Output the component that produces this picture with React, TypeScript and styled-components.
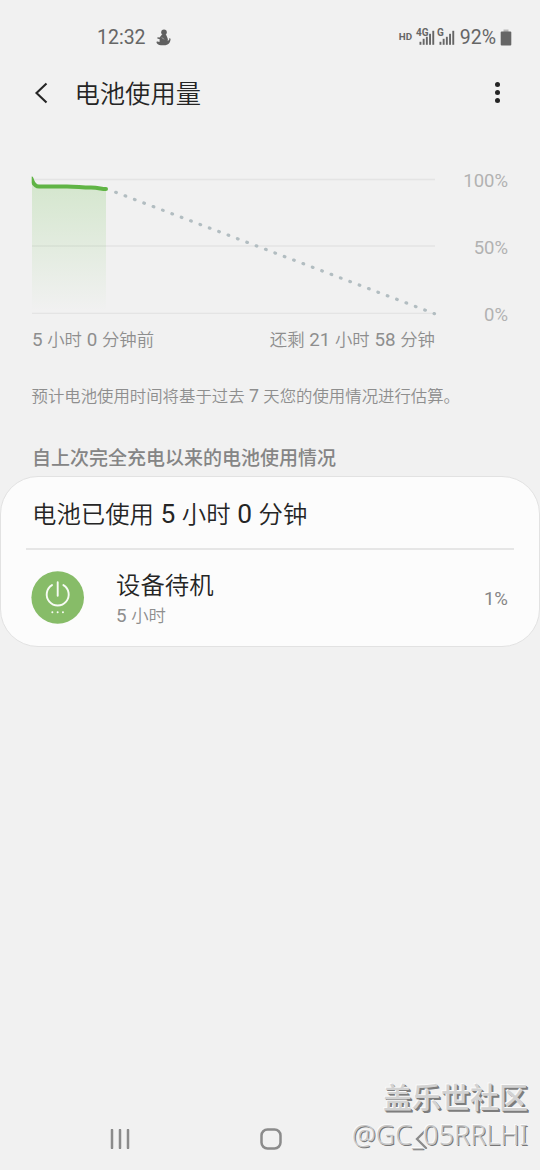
import React from 'react';
import styled, { createGlobalStyle } from 'styled-components';

const GlobalStyle = createGlobalStyle`
  * { box-sizing: border-box; }
  body {
    margin: 0;
    background: #f1f1f1;
    font-family: Roboto, "Noto Sans CJK SC DemiLight", "Noto Sans CJK SC", sans-serif;
    color: #252525;
  }
`;

const Screen = styled.div`
  position: relative;
  display: flex;
  flex-direction: column;
  width: 540px;
  height: 1170px;
  overflow: hidden;
  background: #f1f1f1;
`;

const StatusBar = styled.header`
  display: flex;
  align-items: center;
  height: 60px;
  padding: 15px 28px 0 97px;
  color: #666;
  font-size: 19.5px;
  line-height: 24px;
`;

const StatusIcons = styled.div`
  display: flex;
  align-items: center;
  margin-left: auto;
`;

const Clock = styled.span`
  width: 59px;
`;

const HdTag = styled.span`
  width: 17px;
  margin-top: -2px;
  font-size: 9.8px;
  font-weight: 700;
`;

const Level = styled.span`
  margin: 0 4px 0 3px;
`;

const TitleBar = styled.div`
  display: flex;
  align-items: center;
  height: 66px;
  padding: 0 32px 0 34px;
`;

const Title = styled.h1`
  flex: 1;
  margin: 4px 0 0 25.5px;
  font-size: 25.3px;
  font-weight: 400;
  line-height: 36px;
`;

const ChartSection = styled.section`
  display: flex;
  height: 200px;
  padding: 44px 32px 0 31px;
`;

const Plot = styled.svg`
  display: block;
  flex: none;
  overflow: visible;
`;

const Axis = styled.div`
  display: flex;
  flex: 1;
  flex-direction: column;
  justify-content: space-between;
  height: 155px;
  padding-top: 1px;
  color: #b2b2b2;
  font-size: 18.5px;
  line-height: 20px;
  text-align: right;
`;

const Num = styled.span`
  font-size: 1.08em;
  line-height: 1;
  white-space: pre;
`;

const RangeLabels = styled.div`
  display: flex;
  justify-content: space-between;
  width: 435px;
  height: 28px;
  padding-left: 32px;
  color: #8e8e8e;
  font-size: 17.4px;
  line-height: 28px;
`;

const Hint = styled.p`
  margin: 29px 0 0 31.5px;
  color: #8e8e8e;
  font-size: 16.4px;
  line-height: 28px;
  white-space: nowrap;
`;

const SectionTitle = styled.h2`
  margin: 32px 0 5px 32px;
  color: #858585;
  font-family: "Noto Sans CJK SC", sans-serif;
  font-size: 19px;
  font-weight: 500;
  line-height: 28px;
`;

const Card = styled.section`
  height: 171px;
  padding: 0 25px;
  border: 1px solid #e2e2e2;
  border-radius: 38px;
  background: #fcfcfc;
`;

const CardTitle = styled.div`
  height: 73px;
  padding-left: 6px;
  border-bottom: 2px solid #e6e6e6;
  font-size: 24.4px;
  line-height: 75px;
`;

const UsageRow = styled.div`
  display: flex;
  align-items: center;
  height: 96px;
  padding: 0 6px 0 5px;
`;

const UsageText = styled.div`
  flex: 1;
  margin: 2px 0 0 31px;
`;

const UsageName = styled.div`
  font-size: 24.4px;
  line-height: 34px;
`;

const UsageDetail = styled.div`
  color: #8e8e8e;
  font-size: 17.4px;
  line-height: 26px;
`;

const UsageShare = styled.span`
  margin-top: 2px;
  color: #858585;
  font-size: 18.6px;
`;

const NavBar = styled.nav`
  display: flex;
  align-items: center;
  gap: 130px;
  height: 62px;
  margin-top: auto;
  padding-left: 110px;
`;

const Watermark = styled.div`
  position: absolute;
  right: 12px;
  bottom: 16px;
  color: #d2d2d2;
  text-align: right;
  text-shadow: -1px -1px 0 #fafafa, 1px 1px 0 #7d7d7d, 2px 2px 0 #7d7d7d;
`;

const CommunityName = styled.div`
  font-family: "Noto Sans CJK SC", sans-serif;
  font-size: 29px;
  font-weight: 500;
  line-height: 40px;
`;

const UserName = styled.div`
  color: #c6c6c6;
  font-family: "Noto Sans", sans-serif;
  font-size: 26.9px;
  font-weight: 300;
  line-height: 38px;
  text-shadow: -1px -1px 0 #fafafa, 1px 1px 0 #777;
`;

const SnowmanIcon = () => (
  <svg width="15" height="17" viewBox="0 0 15 17" fill="#606060">
    <circle cx="8" cy="3.3" r="2.8" />
    <path d="M6 5.500Q8 4.500 10 5.500L11.500 9C12 10 12 11 11.700 12L13.300 10.700 13 9.300 14.600 9.700C14.500 13.500 12.500 16.200 8 16.200H5C2.500 16.200.600 15 .4 13C1.200 12.200 2.300 12.500 3.500 13L3.700 10.300 1.300 9.500 1.500 8.300 3.600 8.500z" />
    <path d="M6 8.500l1.800 1.800" stroke="#d8d8d8" strokeWidth=".7" />
  </svg>
);

const NetworkName = styled.text`
  font-size: 10px;
  font-weight: 700;
  fill: #666;
`;

const SignalIcon = styled.svg`
  overflow: visible;
  margin-right: 3px;
`;

const Signal = ({ label, width }: { label: string; width: number }) => (
  <SignalIcon width={width} height="20" viewBox={`0 0 ${width} 20`} fill="#666">
    <NetworkName x="0" y="8">{label}</NetworkName>
    {[3, 6, 8, 11, 14].map((h, i) => (
      <rect key={i} x={width - 14.5 + i * 3.2} y={16.8 - h} width="1.900" height={h} />
    ))}
  </SignalIcon>
);

const BatteryIcon = () => (
  <svg width="12" height="17" viewBox="0 0 12 17">
    <path d="M3.500 3V.5h5V3" fill="#b8b8b8" />
    <rect x=".7" y="2.500" width="10.600" height="14" rx="1" fill="#666" />
  </svg>
);

const BatteryChart = () => (
  <Plot width="405" height="150" viewBox="0 0 405 150" fill="none">
    <defs>
      <linearGradient id="charge" x1="0" y1="0" x2="0" y2="1">
        <stop offset="0" stopColor="#6abf4b" stopOpacity=".22" />
        <stop offset="1" stopColor="#6abf4b" stopOpacity="0" />
      </linearGradient>
      <clipPath id="plotEdge"><rect x=".7" y="0" width="404" height="150" /></clipPath>
    </defs>
    <path d="M1 9.500h403M1 76h403M1 143.300h403" stroke="#e4e4e4" strokeWidth="1.300" />
    <path d="M1 9Q3 16 8 16H45L75 19V141H1z" fill="url(#charge)" />
    <path d="M.5 8.500Q3 16.500 8 16.500H36C46 16.500 50 17.600 60 17.600C68 17.600 70 19 75 19" stroke="#60b445" strokeWidth="4" strokeLinecap="round" strokeLinejoin="round" clipPath="url(#plotEdge)" />
    <path d="M84.700 22.300L403.500 143.700" stroke="#b2bdc1" strokeWidth="3.200" strokeLinecap="round" strokeDasharray=".7 9.320" />
  </Plot>
);

const PowerIcon = () => (
  <svg width="54" height="54" viewBox="0 0 54 54" fill="none">
    <circle cx="26.700" cy="26.500" r="26.300" fill="#87bc68" />
    <path d="M21 14.100a11 11 0 1 0 11.400 0M26.700 11.300v13.500" stroke="#f7fbf4" strokeWidth="1.900" strokeLinecap="round" />
    <path d="M21.300 41.200h.1M26.600 41.200h.1M31.900 41.200h.1" stroke="#f7fbf4" strokeWidth="1.900" strokeLinecap="round" />
  </svg>
);

export default function App() {
  return (
    <>
      <GlobalStyle />
      <Screen>
        <StatusBar>
          <Clock>12:32</Clock>
          <SnowmanIcon />
          <StatusIcons>
            <HdTag>HD</HdTag>
            <Signal label="4G" width={18} />
            <Signal label="G" width={17} />
            <Level>92%</Level>
            <BatteryIcon />
          </StatusIcons>
        </StatusBar>
        <TitleBar>
          <svg width="15" height="22" viewBox="0 0 15 22" fill="none">
            <path d="M12.500 1.500L2.500 11l10 9.500" stroke="#252525" strokeWidth="2.100" />
          </svg>
          <Title>电池使用量</Title>
          <svg width="21" height="24" viewBox="0 0 21 24" fill="#252525">
            <circle cx="10.500" cy="3.500" r="2.500" />
            <circle cx="10.500" cy="11.500" r="2.500" />
            <circle cx="10.500" cy="19.500" r="2.500" />
          </svg>
        </TitleBar>
        <ChartSection>
          <BatteryChart />
          <Axis>
            <span>100%</span>
            <span>50%</span>
            <span>0%</span>
          </Axis>
        </ChartSection>
        <RangeLabels>
          <span><Num>{'5 '}</Num>小时<Num>{' 0 '}</Num>分钟前</span>
          <span>还剩<Num>{' 21 '}</Num>小时<Num>{' 58 '}</Num>分钟</span>
        </RangeLabels>
        <Hint>预计电池使用时间将基于过去<Num>{' 7 '}</Num>天您的使用情况进行估算。</Hint>
        <SectionTitle>自上次完全充电以来的电池使用情况</SectionTitle>
        <Card>
          <CardTitle>电池已使用<Num>{' 5 '}</Num>小时<Num>{' 0 '}</Num>分钟</CardTitle>
          <UsageRow>
            <PowerIcon />
            <UsageText>
              <UsageName>设备待机</UsageName>
              <UsageDetail><Num>{'5 '}</Num>小时</UsageDetail>
            </UsageText>
            <UsageShare>1%</UsageShare>
          </UsageRow>
        </Card>
        <NavBar>
          <svg width="20" height="20" viewBox="0 0 20 20">
            <path d="M2 1v18M10 1v18M18 1v18" stroke="#8b8b8b" strokeWidth="2.500" strokeLinecap="round" />
          </svg>
          <svg width="22" height="22" viewBox="0 0 22 22" fill="none">
            <rect x="1.500" y="1.500" width="19" height="19" rx="6" stroke="#8b8b8b" strokeWidth="2.500" />
          </svg>
          <svg width="19" height="20" viewBox="0 0 19 20" fill="none">
            <path d="M14 1L5 10l9 9" stroke="#8b8b8b" strokeWidth="2.300" strokeLinecap="round" />
          </svg>
        </NavBar>
        <Watermark>
          <CommunityName>盖乐世社区</CommunityName>
          <UserName>@GC_05RRLHI</UserName>
        </Watermark>
      </Screen>
    </>
  );
}
